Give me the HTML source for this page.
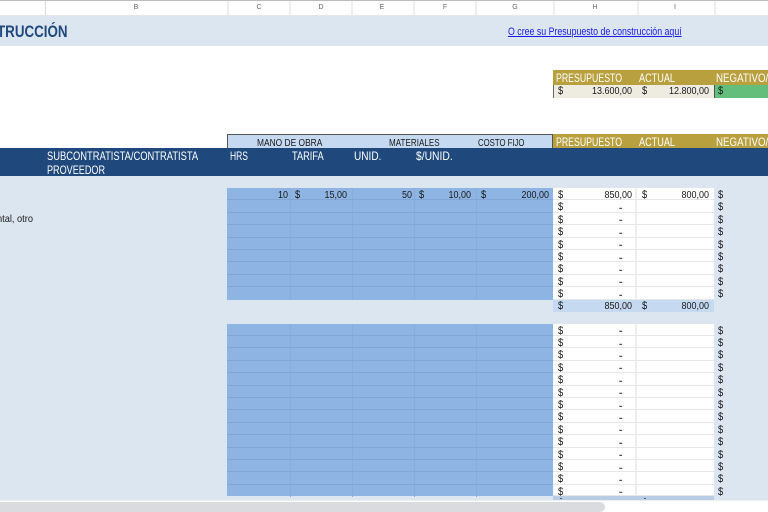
<!DOCTYPE html>
<html lang="es">
<head>
<meta charset="utf-8">
<title>Presupuesto de construcción</title>
<style>
html,body{margin:0;padding:0;background:#fff}
body{width:768px;height:512px;overflow:hidden;position:relative;font-family:"Liberation Sans",sans-serif;color:#222}
#p{left:0;top:0;width:768px;height:512px;overflow:hidden;filter:blur(.3px)}
div,span,a{position:absolute;white-space:nowrap}
.ch{top:3.5px;font-size:7px;line-height:8px;color:#666;width:20px;text-align:center}
.cl{top:1px;height:14px;width:2px;background:#eee}
.w,.k{line-height:14px;transform-origin:left center}
.w{color:#fff;font-size:12px}
.k{color:#1a1a1a;font-size:10.5px}
.col{width:1px;background:#86addd}
.r{left:0;width:768px;height:12.4px}
.g{left:227px;width:326px;height:1px;bottom:0;background:#82a7d6}
.h{left:553px;width:82px;top:0;bottom:0;background:#fff;border-bottom:1px solid #e6e6e6;box-sizing:border-box}
.i{left:635px;width:79px;top:0;bottom:0;background:#fff;border-left:2px solid #eee;border-bottom:1px solid #e6e6e6;box-sizing:border-box}
.d,.m,.a{top:0;line-height:14px;color:#1a1a1a}
.d{font-size:11px;transform:scaleX(.85);transform-origin:left center}
.d1{left:558px}.d2{left:642px}.d3{left:718px}
.m{left:619px;top:1.5px;font-size:10px;font-weight:bold;color:#444}
.a{top:1px;font-size:10px;text-align:right;width:60px;transform:scaleX(.9);transform-origin:right center}
</style>
</head>
<body>
<div id="p">
<!-- column header -->
<div style="left:0;top:0;width:768px;height:1px;background:#bdbdbd"></div>
<div style="left:0;top:15px;width:768px;height:1px;background:#e6e6e6"></div>
<div class="cl" style="left:45px;width:1px;background:#ddd"></div>
<div class="cl" style="left:227px"></div><div class="cl" style="left:289px"></div><div class="cl" style="left:351px"></div><div class="cl" style="left:413px"></div><div class="cl" style="left:475px"></div><div class="cl" style="left:553px"></div><div class="cl" style="left:637px"></div><div class="cl" style="left:714px"></div>
<div class="ch" style="left:126px">B</div><div class="ch" style="left:249px">C</div><div class="ch" style="left:311px">D</div><div class="ch" style="left:372px">E</div><div class="ch" style="left:435px">F</div><div class="ch" style="left:505px">G</div><div class="ch" style="left:585px">H</div><div class="ch" style="left:665px">I</div>

<!-- title band -->
<div style="left:0;top:16px;width:768px;height:29.5px;background:#dce6f1"></div>
<div style="left:-3.5px;top:22.5px;font-size:16.5px;line-height:18px;font-weight:bold;color:#1f497d;transform:scaleX(.81);transform-origin:left center">TRUCCIÓN</div>
<a href="#" style="left:508px;top:24.5px;font-size:11px;line-height:14px;color:#1a1ae6;text-decoration:underline;transform:scaleX(.8);transform-origin:left center">O cree su Presupuesto de construcción aquí</a>

<!-- summary -->
<div style="left:553px;top:70px;width:215px;height:14.5px;background:#b8a03f"></div>
<div class="w" style="left:555.5px;top:70.5px;transform:scaleX(.73)">PRESUPUESTO</div>
<div class="w" style="left:639px;top:70.5px;transform:scaleX(.76)">ACTUAL</div>
<div class="w" style="left:716px;top:70.5px;transform:scaleX(.81)">NEGATIVO/</div>
<div style="left:553px;top:84.5px;width:161px;height:13px;background:#eeece1;border-left:1px solid #666;box-sizing:border-box"></div>
<div style="left:714px;top:84.5px;width:54px;height:13px;background:#63be7b;border-left:1px solid #555;box-sizing:border-box"></div>
<div class="d d1" style="top:84px">$</div>
<div class="a" style="left:572px;top:85px">13.600,00</div>
<div class="d d2" style="top:84px">$</div>
<div class="a" style="left:649px;top:85px">12.800,00</div>
<div class="d d3" style="top:84px">$</div>

<!-- group header row -->
<div style="left:227px;top:134px;width:326px;height:14px;background:#c5d9f1;border:1px solid #555;border-bottom:0;box-sizing:border-box"></div>
<div class="k" style="left:257px;top:136px;transform:scaleX(.8)">MANO DE OBRA</div>
<div class="k" style="left:389px;top:136px;transform:scaleX(.77)">MATERIALES</div>
<div class="k" style="left:478px;top:136px;transform:scaleX(.74)">COSTO FIJO</div>
<div style="left:553px;top:134px;width:215px;height:14px;background:#b8a03f"></div>
<div class="w" style="left:555.5px;top:135px;transform:scaleX(.73)">PRESUPUESTO</div>
<div class="w" style="left:639px;top:135px;transform:scaleX(.76)">ACTUAL</div>
<div class="w" style="left:716px;top:135px;transform:scaleX(.81)">NEGATIVO/</div>

<!-- blue header -->
<div style="left:0;top:148px;width:768px;height:28px;background:#1f497d"></div>
<div class="w" style="left:47px;top:149px;transform:scaleX(.78)">SUBCONTRATISTA/CONTRATISTA</div>
<div class="w" style="left:47px;top:163px;transform:scaleX(.757)">PROVEEDOR</div>
<div class="w" style="left:230px;top:149px;transform:scaleX(.71)">HRS</div>
<div class="w" style="left:292px;top:149px;transform:scaleX(.77)">TARIFA</div>
<div class="w" style="left:354px;top:149px;transform:scaleX(.84)">UNID.</div>
<div class="w" style="left:416px;top:149px;transform:scaleX(.86)">$/UNID.</div>

<!-- body -->
<div style="left:0;top:176px;width:768px;height:324px;background:#dce6f1"></div>
<div style="left:-3px;top:213px;font-size:10.5px;line-height:13px;color:#1a1a1a;transform:scaleX(.88);transform-origin:left center">ntal, otro</div>

<!-- blue blocks -->
<div style="left:227px;top:188px;width:326px;height:111.5px;background:#8db4e2"></div>
<div class="col" style="left:290px;top:188px;height:112px"></div><div class="col" style="left:352px;top:188px;height:112px"></div><div class="col" style="left:414px;top:188px;height:112px"></div><div class="col" style="left:476px;top:188px;height:112px"></div>
<div style="left:227px;top:323.5px;width:326px;height:172.5px;background:#8db4e2"></div>
<div class="col" style="left:290px;top:323.5px;height:173px"></div><div class="col" style="left:352px;top:323.5px;height:173px"></div><div class="col" style="left:414px;top:323.5px;height:173px"></div><div class="col" style="left:476px;top:323.5px;height:173px"></div>

<!-- block 1 rows -->
<div class="r" style="top:188px"><div class="g"></div><div class="h"></div><div class="i"></div>
<div class="a" style="left:228px">10</div><div class="d" style="left:295px">$</div><div class="a" style="left:287px">15,00</div><div class="a" style="left:352px">50</div><div class="d" style="left:419px">$</div><div class="a" style="left:411px">10,00</div><div class="d" style="left:481px">$</div><div class="a" style="left:489px">200,00</div>
<div class="d d1">$</div><div class="a" style="left:572px">850,00</div><div class="d d2">$</div><div class="a" style="left:649px">800,00</div><div class="d d3">$</div></div>
<div class="r" style="top:200.4px"><div class="g"></div><div class="h"></div><div class="i"></div><div class="d d1">$</div><div class="m">-</div><div class="d d3">$</div></div>
<div class="r" style="top:212.8px"><div class="g"></div><div class="h"></div><div class="i"></div><div class="d d1">$</div><div class="m">-</div><div class="d d3">$</div></div>
<div class="r" style="top:225.2px"><div class="g"></div><div class="h"></div><div class="i"></div><div class="d d1">$</div><div class="m">-</div><div class="d d3">$</div></div>
<div class="r" style="top:237.6px"><div class="g"></div><div class="h"></div><div class="i"></div><div class="d d1">$</div><div class="m">-</div><div class="d d3">$</div></div>
<div class="r" style="top:250px"><div class="g"></div><div class="h"></div><div class="i"></div><div class="d d1">$</div><div class="m">-</div><div class="d d3">$</div></div>
<div class="r" style="top:262.4px"><div class="g"></div><div class="h"></div><div class="i"></div><div class="d d1">$</div><div class="m">-</div><div class="d d3">$</div></div>
<div class="r" style="top:274.8px"><div class="g"></div><div class="h"></div><div class="i"></div><div class="d d1">$</div><div class="m">-</div><div class="d d3">$</div></div>
<div class="r" style="top:287.2px"><div class="h"></div><div class="i"></div><div class="d d1">$</div><div class="m">-</div><div class="d d3">$</div></div>

<!-- total 1 -->
<div style="left:553px;top:299.5px;width:161px;height:12px;background:#c5d9f1"></div>
<div class="d d1" style="top:299px">$</div><div class="a" style="left:572px;top:299.5px">850,00</div><div class="d d2" style="top:299px">$</div><div class="a" style="left:649px;top:299.5px">800,00</div>

<!-- block 2 rows -->
<div class="r" style="top:323.6px"><div class="g"></div><div class="h"></div><div class="i"></div><div class="d d1">$</div><div class="m">-</div><div class="d d3">$</div></div>
<div class="r" style="top:336px"><div class="g"></div><div class="h"></div><div class="i"></div><div class="d d1">$</div><div class="m">-</div><div class="d d3">$</div></div>
<div class="r" style="top:348.4px"><div class="g"></div><div class="h"></div><div class="i"></div><div class="d d1">$</div><div class="m">-</div><div class="d d3">$</div></div>
<div class="r" style="top:360.8px"><div class="g"></div><div class="h"></div><div class="i"></div><div class="d d1">$</div><div class="m">-</div><div class="d d3">$</div></div>
<div class="r" style="top:373.2px"><div class="g"></div><div class="h"></div><div class="i"></div><div class="d d1">$</div><div class="m">-</div><div class="d d3">$</div></div>
<div class="r" style="top:385.6px"><div class="g"></div><div class="h"></div><div class="i"></div><div class="d d1">$</div><div class="m">-</div><div class="d d3">$</div></div>
<div class="r" style="top:398px"><div class="g"></div><div class="h"></div><div class="i"></div><div class="d d1">$</div><div class="m">-</div><div class="d d3">$</div></div>
<div class="r" style="top:410.4px"><div class="g"></div><div class="h"></div><div class="i"></div><div class="d d1">$</div><div class="m">-</div><div class="d d3">$</div></div>
<div class="r" style="top:422.8px"><div class="g"></div><div class="h"></div><div class="i"></div><div class="d d1">$</div><div class="m">-</div><div class="d d3">$</div></div>
<div class="r" style="top:435.2px"><div class="g"></div><div class="h"></div><div class="i"></div><div class="d d1">$</div><div class="m">-</div><div class="d d3">$</div></div>
<div class="r" style="top:447.6px"><div class="g"></div><div class="h"></div><div class="i"></div><div class="d d1">$</div><div class="m">-</div><div class="d d3">$</div></div>
<div class="r" style="top:460px"><div class="g"></div><div class="h"></div><div class="i"></div><div class="d d1">$</div><div class="m">-</div><div class="d d3">$</div></div>
<div class="r" style="top:472.4px"><div class="g"></div><div class="h"></div><div class="i"></div><div class="d d1">$</div><div class="m">-</div><div class="d d3">$</div></div>
<div class="r" style="top:484.8px;height:11.4px"><div class="h"></div><div class="i"></div><div class="d d1">$</div><div class="m">-</div><div class="d d3">$</div></div>

<!-- total 2 clipped -->
<div style="left:553px;top:496px;width:161px;height:4px;background:#b8cce4"></div>
<div style="left:560px;top:498px;width:2px;height:1px;background:#556"></div>
<div style="left:644px;top:498px;width:2px;height:1px;background:#556"></div>

<!-- scrollbar -->
<div style="left:0;top:500px;width:768px;height:12px;background:#fff"></div>
<div style="left:0;top:500px;width:768px;height:1px;background:#eceef1"></div>
<div style="left:-6px;top:502px;width:611px;height:9.5px;border-radius:5px;background:#dadbde"></div>
</div>
</body>
</html>
